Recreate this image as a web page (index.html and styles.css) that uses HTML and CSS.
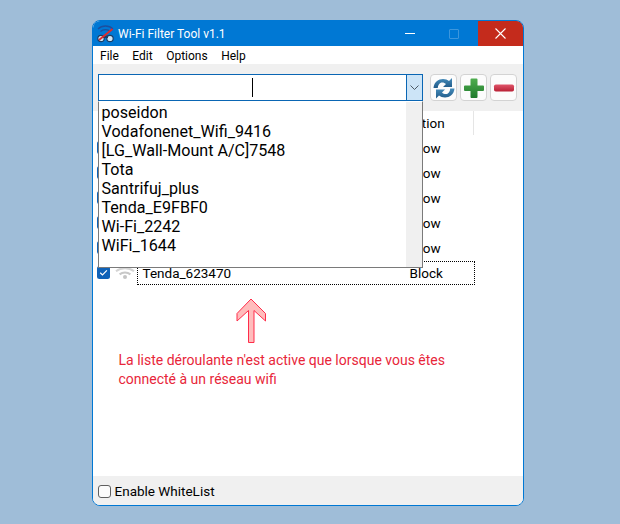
FILE: index.html
```html
<!DOCTYPE html>
<html lang="fr">
<head>
<meta charset="utf-8">
<title>Wi-Fi Filter Tool v1.1</title>
<link rel="stylesheet" href="styles.css">
</head>
<body>
<svg class="defs" width="0" height="0">
  <symbol id="wifi" viewBox="0 0 20 12">
    <path d="M1 4.200C6 .2 14 .2 19 4.200" fill="none" stroke="#d4d4d4" stroke-width="2"/>
    <path d="M4.600 7.400C7.600 5 12.400 5 15.400 7.400" fill="none" stroke="#c8c8c8" stroke-width="2"/>
    <circle cx="10" cy="10" r="2" fill="#c4c4c4"/>
  </symbol>
  <symbol id="check" viewBox="0 0 13 13">
    <rect width="13" height="13" rx="2.500" fill="#0f62b8"/>
    <path d="M3.200 6.800l2.300 2.200 4.400-4.600" fill="none" stroke="#fff" stroke-width="1.200"/>
  </symbol>
</svg>
<main class="window">
  <header class="titlebar">
    <svg class="logo" width="17" height="18" viewBox="0 0 17 18">
      <path d="M1 4C5 0 12 0 16 4M3.500 6.500C6 4 11 4 13.500 6.500" fill="none" stroke="#1c4f9e" stroke-width="1.300"/>
      <circle cx="4" cy="13.500" r="3.200" fill="#cfe6f5" stroke="#1b3e66" stroke-width="1.200"/>
      <circle cx="13" cy="13.500" r="3.200" fill="#cfe6f5" stroke="#1b3e66" stroke-width="1.200"/>
      <rect x="6" y="10.500" width="5" height="2.500" fill="#1b3e66"/>
      <path d="M2 15L15.500 4" stroke="#e02b2b" stroke-width="1.800"/>
    </svg>
    <span class="title">Wi-Fi Filter Tool v1.1</span>
    <div class="caption">
      <span class="cap-btn"><i class="min"></i></span>
      <span class="cap-btn"><i class="max"></i></span>
      <span class="cap-btn close">
        <svg width="11" height="11" viewBox="0 0 11 11"><path d="M.5.500l10 10M10.500.500l-10 10" stroke="#fff" stroke-width="1.100"/></svg>
      </span>
    </div>
  </header>
  <nav class="menu"><span>File</span><span>Edit</span><span>Options</span><span>Help</span></nav>
  <section class="toolbar">
    <div class="combo">
      <span class="combo-field"><i class="caret"></i></span>
      <span class="combo-arrow">
        <svg width="9" height="5" viewBox="0 0 9 5"><path d="M.5.500l4 4 4-4" fill="none" stroke="#4c5a66" stroke-width="1"/></svg>
      </span>
      <div class="dropdown">
        <ul class="options">
          <li>poseidon</li>
          <li>Vodafonenet_Wifi_9416</li>
          <li>[LG_Wall-Mount A/C]7548</li>
          <li>Tota</li>
          <li>Santrifuj_plus</li>
          <li>Tenda_E9FBF0</li>
          <li>Wi-Fi_2242</li>
          <li>WiFi_1644</li>
        </ul>
        <div class="scrollbar"></div>
      </div>
    </div>
    <button class="tool" aria-label="Refresh">
      <svg width="24" height="24" viewBox="0 0 24 24">
        <defs>
          <linearGradient id="blue" x1="0" y1="0" x2="0" y2="1"><stop offset="0" stop-color="#458cbb"/><stop offset="1" stop-color="#205a88"/></linearGradient>
        </defs>
        <path d="M1.500 12C2 6 6.500 3 11 3c2.500 0 4.500.8 6 2l3-3v9h-9l3-3c-1-1-2.300-1.600-3.800-1.600C7.500 6.400 6 9 5.800 12z" fill="url(#blue)"/>
        <path d="M22.500 12.500C22 18.500 17.500 21.500 13 21.500c-2.500 0-4.500-.8-6-2l-3 3v-9h9l-3 3c1 1 2.300 1.600 3.800 1.600 2.700 0 4.200-2.600 4.400-5.600z" fill="url(#blue)"/>
      </svg>
    </button>
    <button class="tool" aria-label="Add">
      <svg width="22" height="22" viewBox="0 0 22 22">
        <defs>
          <linearGradient id="green" x1="0" y1="0" x2="0" y2="1"><stop offset="0" stop-color="#4fae4f"/><stop offset="1" stop-color="#1f7a2c"/></linearGradient>
        </defs>
        <path d="M8.500 1.500h5a1 1 0 0 1 1 1v6h5.500a1 1 0 0 1 1 1v3.500a1 1 0 0 1-1 1h-5.500v6a1 1 0 0 1-1 1h-5a1 1 0 0 1-1-1v-6H2a1 1 0 0 1-1-1V9.500a1 1 0 0 1 1-1h5.500v-6a1 1 0 0 1 1-1z" fill="url(#green)"/>
      </svg>
    </button>
    <button class="tool" aria-label="Remove">
      <svg width="22" height="10" viewBox="0 0 22 10">
        <defs>
          <linearGradient id="red" x1="0" y1="0" x2="0" y2="1"><stop offset="0" stop-color="#e0566b"/><stop offset="1" stop-color="#b92035"/></linearGradient>
        </defs>
        <rect x="1" y="1.500" width="20" height="7" rx="1.800" fill="url(#red)"/>
      </svg>
    </button>
  </section>
  <section class="list">
    <div class="list-head"><span class="head-cell">Action</span></div>
    <div class="row"><svg class="cb"><use href="#check"/></svg><svg class="wf"><use href="#wifi"/></svg><div class="cell"><span class="name"></span><span>Allow</span></div></div>
    <div class="row"><svg class="cb"><use href="#check"/></svg><svg class="wf"><use href="#wifi"/></svg><div class="cell"><span class="name"></span><span>Allow</span></div></div>
    <div class="row"><svg class="cb"><use href="#check"/></svg><svg class="wf"><use href="#wifi"/></svg><div class="cell"><span class="name"></span><span>Allow</span></div></div>
    <div class="row"><svg class="cb"><use href="#check"/></svg><svg class="wf"><use href="#wifi"/></svg><div class="cell"><span class="name"></span><span>Allow</span></div></div>
    <div class="row"><svg class="cb"><use href="#check"/></svg><svg class="wf"><use href="#wifi"/></svg><div class="cell"><span class="name"></span><span>Allow</span></div></div>
    <div class="row"><svg class="cb"><use href="#check"/></svg><svg class="wf"><use href="#wifi"/></svg><div class="cell focus"><span class="name">Tenda_623470</span><span>Block</span></div></div>
    <svg class="big-arrow" width="31" height="46" viewBox="0 0 31 46">
      <path d="M15 1L1 15.500V23L12.500 12.500V44.500H18V12.500L29.500 23V15.500Z" fill="#ffbcbc" stroke="#ff2d4a" stroke-width="1"/>
    </svg>
    <p class="note">La liste déroulante n'est active que lorsque vous êtes<br>connecté à un réseau wifi</p>
  </section>
  <footer class="footer">
    <label class="enable"><i class="box"></i><span>Enable WhiteList</span></label>
  </footer>
</main>
</body>
</html>
```

FILE: styles.css
```css
* { box-sizing: border-box; }
html, body { margin: 0; height: 100%; }
body {
  background: #9fbdd8;
  font-family: Roboto, "Open Sans", "Liberation Sans", sans-serif;
  font-size: 12px;
  color: #000;
  overflow: hidden;
  padding: 20px 0 0 92px;
}
.defs { position: absolute; }
.window {
  width: 432px;
  height: 486px;
  border: 1.500px solid #0078d4;
  border-radius: 8px;
  background: #fff;
  display: flex;
  flex-direction: column;
  overflow: hidden;
}
.titlebar {
  height: 25px;
  flex: none;
  background: #0078d4;
  color: #fff;
  display: flex;
  align-items: center;
  padding-left: 4px;
}
.logo { flex: none; }
.title { margin-left: 4px; font-size: 12px; }
.caption { margin-left: auto; display: flex; height: 100%; }
.cap-btn { width: 45px; display: flex; align-items: center; justify-content: center; }
.cap-btn:first-child { padding-right: 2px; }
.min { width: 10px; height: 1px; background: #fff; display: block; }
.max { width: 10px; height: 10px; border: 1px solid #3c96dd; border-radius: 1px; display: block; margin-right: 3px; }
.close { background: #c42b1c; }
.menu {
  height: 18px;
  flex: none;
  display: flex;
  align-items: center;
  gap: 13.500px;
  padding: 2px 0 0 7px;
  font-size: 12px;
}
.toolbar {
  height: 47px;
  flex: none;
  background: #f0f0f0;
  display: flex;
  align-items: flex-start;
  padding: 10px 0 0 5px;
  position: relative;
  z-index: 2;
}
.combo {
  width: 325px;
  height: 27px;
  display: flex;
  border: 1.500px solid #0a66b4;
  background: #fff;
  margin-right: 7px;
  position: relative;
}
.combo-field { flex: 1; display: flex; justify-content: center; align-items: center; }
.caret { width: 1.500px; height: 19px; background: #000; display: block; }
.combo-arrow {
  width: 16px;
  background: #cce4f7;
  border-left: 1.500px solid #0a66b4;
  display: flex;
  align-items: center;
  justify-content: center;
}
.dropdown {
  position: absolute;
  top: 25.500px;
  left: -1.500px;
  width: 325px;
  height: 167px;
  background: #fff;
  border: 1px solid #7a7a7a;
  border-top-color: #fff;
  display: flex;
}
.options {
  list-style: none;
  margin: 0;
  padding: 1px 0 0 3px;
  flex: 1;
  font-size: 16.100px;
  line-height: 19.100px;
}
.scrollbar { width: 16px; background: #f0f0f0; }
.tool {
  width: 27px;
  height: 27px;
  margin-right: 3px;
  padding: 0;
  border: 1px solid #d3d3d3;
  border-radius: 4px;
  background: #fcfcfc;
  display: flex;
  align-items: center;
  justify-content: center;
}
.list { flex: 1; position: relative; background: #fff; font-size: 13.500px; }
.list-head {
  height: 24px;
  padding-left: 313px;
  display: flex;
  align-items: center;
}
.head-cell {
  width: 68px;
  height: 100%;
  display: flex;
  align-items: center;
  border-right: 1px solid #e5e5e5;
}
.row {
  height: 25px;
  display: flex;
  align-items: center;
  padding-left: 3.500px;
}
.cb { width: 13px; height: 13px; flex: none; }
.wf { width: 20px; height: 12px; margin-left: 5px; margin-right: 2px; flex: none; }
.cell {
  width: 338px;
  height: 24px;
  display: flex;
  align-items: center;
  padding-left: 5px;
  border: 1px dotted transparent;
}
.focus { border-color: #000; }
.name { width: 265px; flex: none; }
.focus .name { width: 267px; }
.big-arrow { position: absolute; left: 142.500px; top: 187px; }
.note {
  position: absolute;
  left: 25.500px;
  top: 240px;
  margin: 0;
  font-size: 14px;
  line-height: 19px;
  color: #e8263a;
  white-space: nowrap;
}
.footer {
  height: 29px;
  flex: none;
  background: #f0f0f0;
  display: flex;
  align-items: center;
  padding: 1px 0 0 4.500px;
}
.enable { display: flex; align-items: center; gap: 4px; font-size: 13.500px; }
.box {
  width: 13px;
  height: 13px;
  border: 1px solid #5f5f5f;
  border-radius: 3px;
  background: #fbfbfb;
  display: block;
}
```
